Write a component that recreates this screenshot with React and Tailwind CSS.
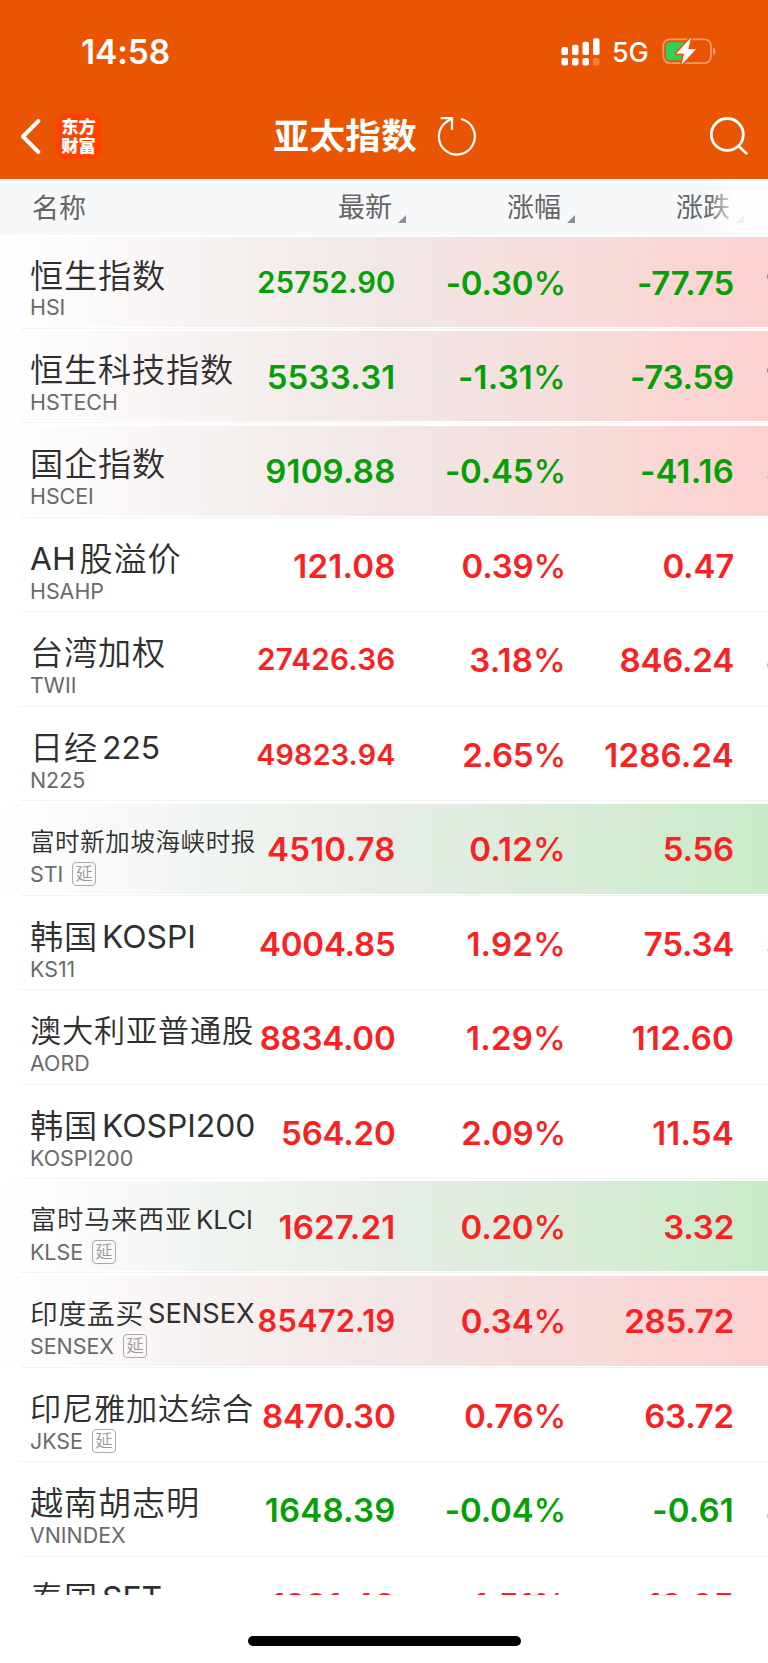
import React from 'react';
import clsx from 'clsx';

const NAME_SIZES = {
    xl: 'text-[33.2px] tracking-[0.8px]',
    lg: 'text-[31.2px] tracking-[0.8px]',
    md: 'text-[27.8px] tracking-[0.7px]',
    sm: 'text-[26.3px] tracking-[0.7px]',
    xs: 'text-[24.5px] tracking-[0.6px]',
};

const LATIN_SIZES = {
    xl: 'text-[31.8px]',
    lg: 'text-[31px]',
    md: 'text-[27.2px]',
    sm: 'text-[25.8px]',
    xs: 'text-[25px]',
};

const indices = [
    { cjk: '恒生指数', size: 'xl', code: 'HSI', price: '25752.90', priceSize: 'text-[29.2px]', pct: '-0.30', change: '-77.75', down: true, flash: 'red', next: '1' },
    { cjk: '恒生科技指数', size: 'xl', code: 'HSTECH', price: '5533.31', pct: '-1.31', change: '-73.59', down: true, flash: 'red', next: '1' },
    { cjk: '国企指数', size: 'xl', code: 'HSCEI', price: '9109.88', pct: '-0.45', change: '-41.16', down: true, flash: 'red', next: '3' },
    { latinFirst: 'AH', cjk: '股溢价', size: 'xl', code: 'HSAHP', price: '121.08', pct: '0.39', change: '0.47' },
    { cjk: '台湾加权', size: 'xl', code: 'TWII', price: '27426.36', priceSize: 'text-[29.7px]', pct: '3.18', change: '846.24', next: '8' },
    { cjk: '日经', latin: '225', size: 'xl', code: 'N225', price: '49823.94', priceSize: 'text-[28.7px]', pct: '2.65', change: '1286.24' },
    { cjk: '富时新加坡海峡时报', size: 'xs', code: 'STI', delayed: true, price: '4510.78', pct: '0.12', change: '5.56', flash: 'green' },
    { cjk: '韩国', latin: 'KOSPI', size: 'xl', code: 'KS11', price: '4004.85', pct: '1.92', change: '75.34', next: '3' },
    { cjk: '澳大利亚普通股', size: 'lg', code: 'AORD', price: '8834.00', pct: '1.29', change: '112.60' },
    { cjk: '韩国', latin: 'KOSPI200', size: 'xl', code: 'KOSPI200', price: '564.20', pct: '2.09', change: '11.54' },
    { cjk: '富时马来西亚', latin: 'KLCI', size: 'sm', code: 'KLSE', delayed: true, price: '1627.21', pct: '0.20', change: '3.32', flash: 'green' },
    { cjk: '印度孟买', latin: 'SENSEX', size: 'md', code: 'SENSEX', delayed: true, price: '85472.19', priceSize: 'text-[30.8px]', pct: '0.34', change: '285.72', flash: 'red' },
    { cjk: '印尼雅加达综合', size: 'lg', code: 'JKSE', delayed: true, price: '8470.30', pct: '0.76', change: '63.72' },
    { cjk: '越南胡志明', size: 'xl', code: 'VNINDEX', price: '1648.39', pct: '-0.04', change: '-0.61', down: true, next: '4' },
    { cjk: '泰国', latin: 'SET', size: 'xl', code: 'SET', price: '1291.48', pct: '1.51', change: '19.25' },
];

const StatusBar = () => (
    <div className="h-[93px] flex items-start justify-between pl-[81px] pr-[50px]">
        <span className="mt-[31px] text-[33.5px] leading-[42px] font-semibold tracking-[-0.1px]">14:58</span>
        <div className="mt-[36px] h-[32px] flex items-center">
            <svg width="40" height="30" viewBox="0 0 40 30" fill="white">
                <rect x="0.5" y="10" width="6.5" height="8" rx="1.8" />
                <rect x="11" y="7.7" width="6.5" height="10.3" rx="1.8" />
                <rect x="21.5" y="4.7" width="6.5" height="13.3" rx="1.8" />
                <rect x="32" y="1.2" width="6.5" height="16.8" rx="1.8" />
                <rect x="0.5" y="21" width="6.5" height="7.5" rx="1.8" />
                <rect x="11" y="21" width="6.5" height="7.5" rx="1.8" />
                <rect x="21.5" y="21" width="6.5" height="7.5" rx="1.8" />
                <rect x="32" y="21" width="6.5" height="7.5" rx="1.8" opacity="0.25" />
            </svg>
            <span className="ml-[11px] mt-[2px] w-[38px] text-[27px] leading-[32px] font-medium tracking-[-0.3px]">5G</span>
            <svg className="ml-[12px]" width="56" height="30" viewBox="0 0 56 30">
                <rect x="1.3" y="2.3" width="47.7" height="23.8" rx="6.5" fill="none" stroke="white" strokeOpacity="0.42" strokeWidth="1.8" />
                <path d="M51 10.5c3.6 1 3.6 6.6 0 7.6z" fill="white" fillOpacity="0.42" />
                <path d="M7.5 5.2H22V23.2H7.5a3.5 3.5 0 0 1-3.5-3.5V8.7a3.5 3.5 0 0 1 3.5-3.5z" fill="#30d158" />
                <path d="M28.500 1.500L14.800 16.300h7.800L20.300 26.500 33.300 12.500h-7.600z" fill="white" stroke="#ea5504" strokeWidth="4" strokeLinejoin="round" />
                <path d="M28.500 1.500L14.800 16.300h7.800L20.300 26.500 33.300 12.500h-7.600z" fill="white" stroke="white" strokeWidth="0.8" strokeLinejoin="round" />
            </svg>
        </div>
    </div>
);

const NavBar = () => (
    <div className="h-[85px] flex items-center pl-[20px] pr-[19px]">
        <svg width="22" height="36" viewBox="0 0 22 36" fill="none" stroke="white" strokeWidth="4" strokeLinecap="round" strokeLinejoin="round">
            <path d="M18.300 3L3 18.500 18.300 34" />
        </svg>
        <div className="ml-[13.5px] w-[46px] h-[46px] rounded-[10px] bg-[#ff4200] flex flex-col items-center justify-center text-[17.3px] leading-[19px] font-black">
            <span>东方</span>
            <span>财富</span>
        </div>
        <h1 className="ml-[172px] w-[144px] mt-[2px] text-[35.5px] leading-[44px] tracking-[0.4px] font-bold whitespace-nowrap">亚太指数</h1>
        <svg className="ml-[18.5px]" width="42" height="42" viewBox="0 0 42 42" fill="none" stroke="white" strokeWidth="2.2">
            <path d="M25 4A18 18 0 1 1 10.500 6.800L15.500 3.500" />
            <path d="M4.500 3.200H16V15" />
        </svg>
        <svg className="ml-auto" width="40" height="40" viewBox="0 0 40 40" fill="none" stroke="white" strokeWidth="2.8" strokeLinecap="round">
            <circle cx="18.3" cy="18.5" r="16" />
            <path d="M29.500 30L37.300 37.300" />
        </svg>
    </div>
);

const SortMark = () => (
    <svg className="w-[8px] h-[8px] mt-[23px] ml-[6px] shrink-0" viewBox="0 0 8 8">
        <path d="M8 0V8H0z" fill="#8b8d92" />
    </svg>
);

const TableHead = () => (
    <div className="relative h-[55.5px] pt-[2px] shrink-0 bg-[#f7f8fa] flex text-[27px] leading-[55px] text-[#666]">
        <span className="w-[237px] pl-[32px]">名称</span>
        <div className="w-[169px] flex items-center justify-end">最新<SortMark /></div>
        <div className="w-[169px] flex items-center justify-end">涨幅<SortMark /></div>
        <div className="w-[169px] flex items-center justify-end">涨跌<SortMark /></div>
        <div className="absolute right-0 top-0 w-[60px] h-[53px] bg-linear-to-r from-white/0 via-white/85 via-45% to-white" />
    </div>
);

const Figure = ({ value, unit, size, down, className }) => (
    <span
        className={clsx(
            'text-right font-semibold whitespace-nowrap shrink-0',
            size ? 'leading-[95px] tracking-[0.2px]' : 'leading-[97px] text-[33px]',
            size,
            !size && (value.includes('1') ? 'tracking-[0.2px]' : 'tracking-[-0.2px]'),
            down ? 'text-[#05a005]' : 'text-[#f82222]',
            className
        )}
    >
        {value}
        {unit && <span className="font-medium">{unit}</span>}
    </span>
);

const IndexRow = ({ item }) => (
    <div className="h-[94.46px] relative shrink-0">
        {item.flash && (
            <div
                className={clsx(
                    'absolute left-0 right-0 top-[2.3px] h-[90px] bg-linear-to-r',
                    item.flash === 'red'
                        ? 'from-white via-[#f1e7e6] via-50% to-[#fcd1d0]'
                        : 'from-white via-[#e6ede6] via-50% to-[#c9ebc9]'
                )}
            />
        )}
        <div className="relative h-full flex">
            <div className="w-[226px] shrink-0 pl-[30px] pt-[23px] whitespace-nowrap">
                <div className="h-[36px] leading-[36px] text-[#2f2f2f] flex items-center">
                    {item.latinFirst && <span className={clsx('mr-[4px]', LATIN_SIZES[item.size])}>{item.latinFirst}</span>}
                    <span className={clsx('font-[350]', NAME_SIZES[item.size])}>{item.cjk}</span>
                    {item.latin && <span className={clsx('ml-[4px]', LATIN_SIZES[item.size])}>{item.latin}</span>}
                </div>
                <div className="h-[28px] flex items-center text-[21.4px] text-[#6a6a6a]">
                    <span>{item.code}</span>
                    {item.delayed && (
                        <span className="ml-[9px] w-[24px] h-[24px] rounded-[4px] border-[1.5px] border-[#aaa] text-[17px] leading-[20px] font-[350] text-[#999] flex items-center justify-center">
                            延
                        </span>
                    )}
                </div>
            </div>
            <div className="flex shrink-0">
                <Figure value={item.price} size={item.priceSize} down={item.down} className="w-[169.5px]" />
                <Figure value={item.pct} unit="%" down={item.down} className="w-[170.5px]" />
                <Figure value={item.change} down={item.down} className="w-[168px]" />
            </div>
            {item.next && <span className="ml-[32px] leading-[97px] text-[33px] font-semibold text-[#333]">{item.next}</span>}
        </div>
        <div className="absolute left-[20px] right-0 bottom-0 h-px bg-[#f4f4f5]" />
    </div>
);

const App = () => (
    <div className="w-[768px] h-[1663px] bg-white overflow-hidden flex flex-col font-[Inter,'Noto_Sans_CJK_SC',sans-serif]">
        <header className="bg-[#ea5504] text-white h-[179px] shrink-0">
            <StatusBar />
            <NavBar />
        </header>
        <TableHead />
        <main className="h-[1360.5px] overflow-hidden flex flex-col shrink-0">
            {indices.map((item) => (
                <IndexRow key={item.code} item={item} />
            ))}
        </main>
        <footer className="grow flex items-start justify-center pt-[41px]">
            <div className="w-[273px] h-[10px] rounded-full bg-black" />
        </footer>
    </div>
);

export default App;
